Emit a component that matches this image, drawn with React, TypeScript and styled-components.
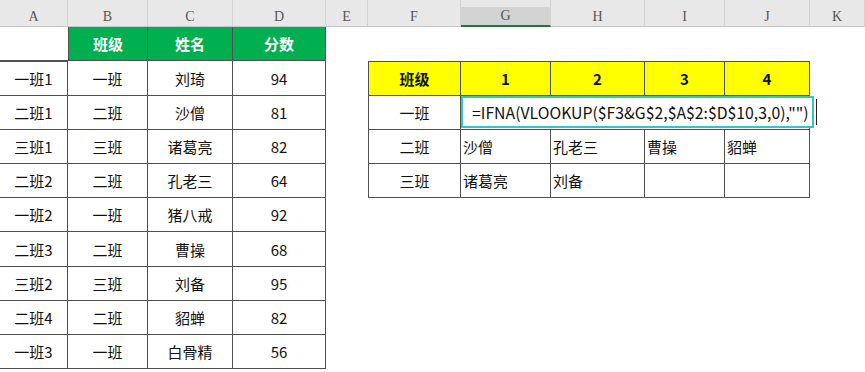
import React from 'react'
import styled, {createGlobalStyle} from 'styled-components'

type Fill = 'none' | 'green' | 'yellow'

type CellSpec = {
  text?: string
  fill?: Fill
  bold?: boolean
  boxed?: boolean
  bottomOnly?: boolean
  align?: 'center' | 'left'
  editor?: boolean
  span?: number
}

const columns = ['A', 'B', 'C', 'D', 'E', 'F', 'G', 'H', 'I', 'J', 'K']
const colWidths = [68, 80, 85, 93, 42, 93, 90, 94, 80, 85, 55]
const rowHeights = [34, 35, 34, 34, 34, 34, 35, 34, 34, 34]
const activeColumn = 'G'
const formula = '=IFNA(VLOOKUP($F3&G$2,$A$2:$D$10,3,0),"")'

const E: CellSpec = {}
const green = (t: string): CellSpec => ({text: t, fill: 'green', bold: true, boxed: true})
const yellow = (t: string): CellSpec => ({text: t, fill: 'yellow', bold: true, boxed: true})
const c = (t = ''): CellSpec => ({text: t, boxed: true})
const name = (t = ''): CellSpec => ({text: t, boxed: true, align: 'left'})
const blanks = (n: number): CellSpec[] => Array.from({length: n}, () => E)

const sheet: CellSpec[][] = [
  [{bottomOnly: true}, green('班级'), green('姓名'), green('分数'), ...blanks(7)],
  [c('一班1'), c('一班'), c('刘琦'), c('94'), E, yellow('班级'), yellow('1'), yellow('2'), yellow('3'), yellow('4'), E],
  [c('二班1'), c('二班'), c('沙僧'), c('81'), E, c('一班'), {editor: true, span: 4, boxed: true}, E],
  [c('三班1'), c('三班'), c('诸葛亮'), c('82'), E, c('二班'), name('沙僧'), name('孔老三'), name('曹操'), name('貂蝉'), E],
  [c('二班2'), c('二班'), c('孔老三'), c('64'), E, c('三班'), name('诸葛亮'), name('刘备'), name(), name(), E],
  [c('一班2'), c('一班'), c('猪八戒'), c('92'), ...blanks(7)],
  [c('二班3'), c('二班'), c('曹操'), c('68'), ...blanks(7)],
  [c('三班2'), c('三班'), c('刘备'), c('95'), ...blanks(7)],
  [c('二班4'), c('二班'), c('貂蝉'), c('82'), ...blanks(7)],
  [c('一班3'), c('一班'), c('白骨精'), c('56'), ...blanks(7)],
]

// which (row, col) slots belong to a bordered table, spans included
const boxedMap: boolean[][] = sheet.map(row => {
  const out: boolean[] = []
  row.forEach(cell => {
    for (let i = 0; i < (cell.span || 1); i++) out.push(!!cell.boxed)
  })
  return out
})

const line = '1px solid #505050'

const fills: Record<Fill, string> = {
  none: 'transparent',
  green: '#00b050',
  yellow: '#ffff00',
}

const GlobalStyle = createGlobalStyle`
  html, body {
    margin: 0;
    padding: 0;
    background: #fff;
  }
  body {
    font-family: "Noto Sans CJK SC", "Noto Sans", sans-serif;
    overflow: hidden;
  }
`

const Sheet = styled.div`
  display: grid;
  grid-template-columns: ${colWidths.map(w => `${w}px`).join(' ')};
  grid-template-rows: 27px ${rowHeights.map(h => `${h}px`).join(' ')};
  width: 865px;
  height: 372px;
  overflow: hidden;
  background: #fff;
`

const ColHead = styled.div<{$active: boolean}>`
  display: flex;
  align-items: center;
  justify-content: center;
  box-sizing: border-box;
  padding-top: 7px;
  background: ${p =>
    p.$active ? 'linear-gradient(#e8e8e8 0 7px, #d3d3d3 7px)' : '#e8e8e8'};
  border-right: 1px solid #d2d2d2;
  border-bottom: ${p => (p.$active ? '2px solid #217346' : '1px solid #c6c6c6')};
  font-family: "Liberation Serif", "DejaVu Serif", serif;
  font-size: 14px;
  color: #555;
`

const Cell = styled.div<{
  $fill: Fill
  $bold: boolean
  $align: 'center' | 'left'
  $span: number
  $top: boolean
  $left: boolean
  $right: boolean
  $bottom: boolean
}>`
  grid-column: span ${p => p.$span};
  position: relative;
  display: flex;
  align-items: center;
  justify-content: ${p => (p.$align === 'left' ? 'flex-start' : 'center')};
  box-sizing: border-box;
  min-width: 0;
  padding: 0 2px;
  background: ${p => fills[p.$fill]};
  color: ${p => (p.$fill === 'green' ? '#fff' : '#111')};
  font-size: 15px;
  font-weight: ${p => (p.$bold ? 700 : 400)};
  white-space: nowrap;
  border-top: ${p => (p.$top ? line : 'none')};
  border-left: ${p => (p.$left ? line : 'none')};
  border-right: ${p => (p.$right ? line : 'none')};
  border-bottom: ${p => (p.$bottom ? line : 'none')};
`

const Editor = styled.div`
  position: absolute;
  top: 0;
  left: 0;
  right: -5px;
  bottom: 1px;
  display: flex;
  align-items: center;
  box-sizing: border-box;
  padding-left: 9px;
  border: 2px solid #35c4c8;
  background: #fff;
  color: #111;
  font-size: 15.8px;
`

const Caret = styled.span`
  position: absolute;
  top: 1px;
  right: -5px;
  width: 1px;
  height: 26px;
  background: #222;
`

const App = () => {
  return (
    <>
      <GlobalStyle />
      <Sheet>
        {columns.map(col => (
          <ColHead key={col} $active={col === activeColumn}>
            {col}
          </ColHead>
        ))}
        {sheet.map((row, r) => {
          let col = 0
          return row.map((cell, i) => {
            const start = col
            const span = cell.span || 1
            col += span
            const boxed = !!cell.boxed
            const top = boxed && r > 0 && !boxedMap[r - 1][start]
            const left = boxed && start > 0 && !boxedMap[r][start - 1]
            return (
              <Cell
                key={`${r}-${i}`}
                $fill={cell.fill || 'none'}
                $bold={!!cell.bold}
                $align={cell.align || 'center'}
                $span={span}
                $top={top}
                $left={left}
                $right={boxed}
                $bottom={boxed || !!cell.bottomOnly}
              >
                {cell.editor ? (
                  <Editor>
                    {formula}
                    <Caret />
                  </Editor>
                ) : (
                  cell.text
                )}
              </Cell>
            )
          })
        })}
      </Sheet>
    </>
  )
}

export default App
